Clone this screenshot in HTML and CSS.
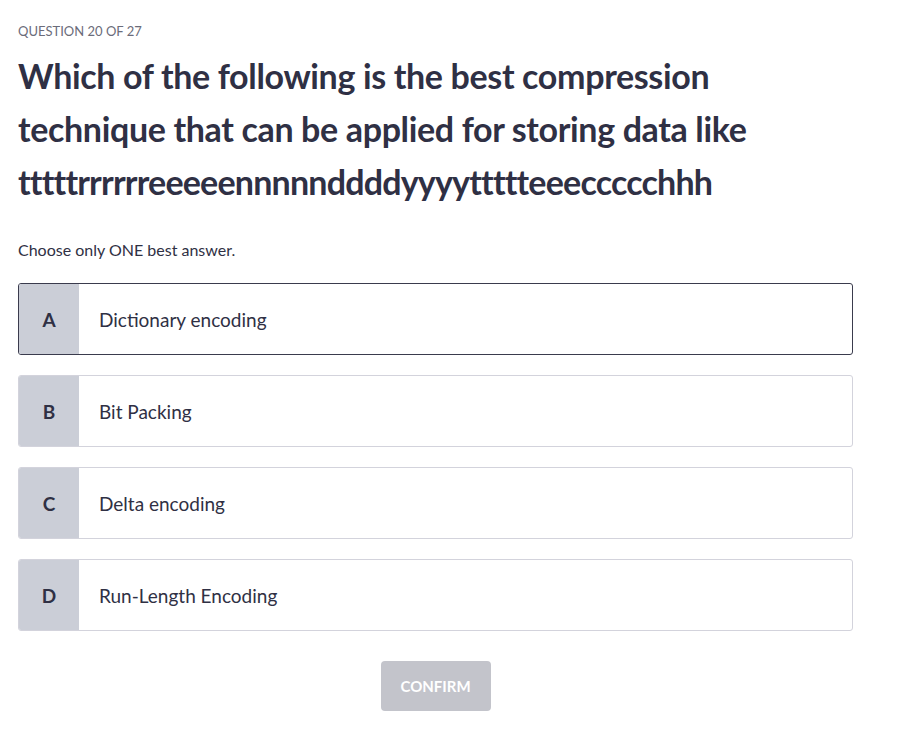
FILE: index.html
```html
<!DOCTYPE html>
<html>
<head>
<meta charset="utf-8">
<link rel="stylesheet" href="styles.css">
</head>
<body>
<main class="quiz">
  <div class="counter">QUESTION 20 OF 27</div>
  <h1 class="question">Which of the following is the best compression technique that can be applied for storing data like <span class="sample">tttttrrrrrreeeeennnnnddddyyyyttttteeeccccchhh</span></h1>
  <p class="hint">Choose only ONE best answer.</p>
  <div class="options">
    <div class="option selected"><span class="letter">A</span><span class="text">Dictionary encoding</span></div>
    <div class="option"><span class="letter">B</span><span class="text">Bit Packing</span></div>
    <div class="option"><span class="letter">C</span><span class="text">Delta encoding</span></div>
    <div class="option"><span class="letter">D</span><span class="text">Run-Length Encoding</span></div>
  </div>
  <div class="actions"><button class="confirm" disabled>CONFIRM</button></div>
</main>
</body>
</html>
```
FILE: styles.css
```css
html, body { margin: 0; background: #fff; }
body {
  font-family: Lato, "Noto Sans", sans-serif;
  color: #2f3044;
}
.quiz {
  width: 835px;
  padding: 23px 18px 0 18px;
}
.counter {
  font-size: 13px;
  line-height: 16px;
  color: #6b6c7a;
}
.question {
  margin: 10px 0 0 0;
  font-size: 34px;
  line-height: 53px;
  font-weight: 700;
  letter-spacing: -0.35px;
  color: #2f3044;
}
.sample { letter-spacing: -0.8px; }
.hint {
  margin: 32px 0 0 0;
  font-size: 16px;
  line-height: 20px;
  color: #2f3044;
}
.options {
  margin-top: 23px;
  display: flex;
  flex-direction: column;
  gap: 20px;
}
.option {
  display: flex;
  height: 70px;
  border: 1px solid #d3d3dc;
  border-radius: 3px;
  overflow: hidden;
}
.option.selected { border-color: #3a3b4d; }
.letter {
  width: 60px;
  flex: none;
  background: #cbced7;
  display: flex;
  align-items: center;
  justify-content: center;
  font-size: 19px;
  font-weight: 700;
  color: #2f3044;
}
.text {
  display: flex;
  align-items: center;
  padding-left: 20px;
  font-size: 19px;
  color: #2f3044;
}
.actions {
  display: flex;
  justify-content: center;
  margin-top: 30px;
}
.confirm {
  width: 110px;
  height: 50px;
  border: 0;
  border-radius: 4px;
  background: #c3c4cb;
  color: #fff;
  font-family: inherit;
  font-size: 15px;
  font-weight: 700;
}
```
